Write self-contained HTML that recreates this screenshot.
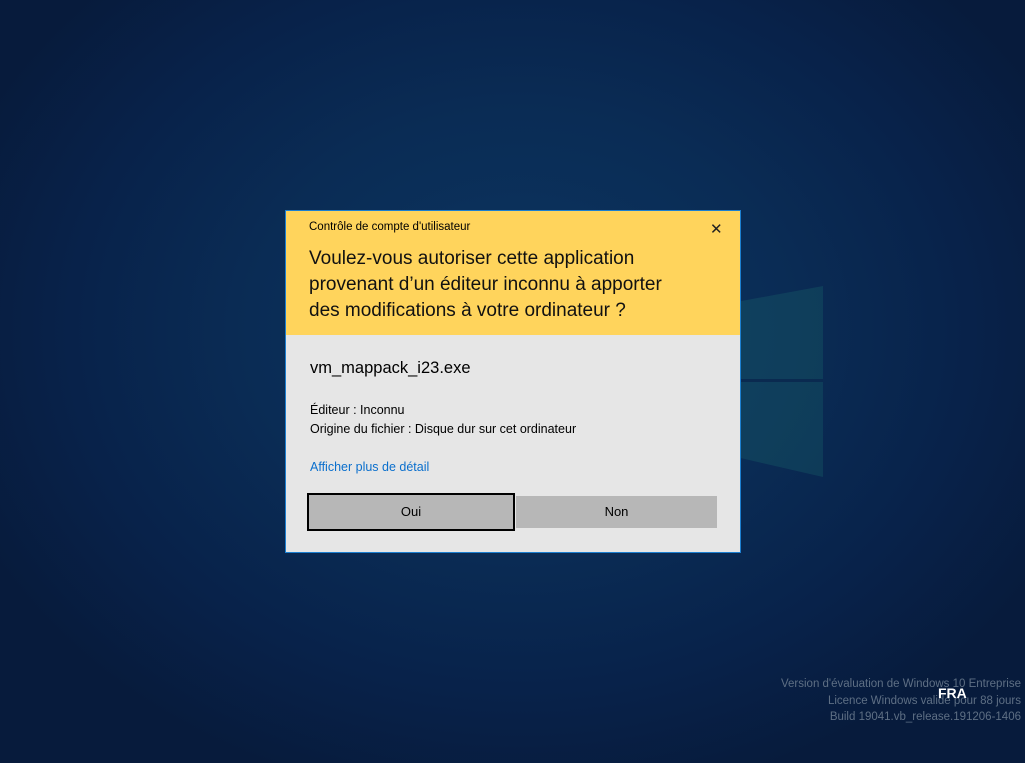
<!DOCTYPE html>
<html><head><meta charset="utf-8"><style>
*{margin:0;padding:0;box-sizing:border-box}
body{width:1025px;height:763px;overflow:hidden;position:relative;font-family:"Liberation Sans",sans-serif;
background:radial-gradient(ellipse 600px 480px at 520px 330px,#0c3561 0%,#0a2c55 45%,#08224a 75%,#071b3c 100%);}
.logo{position:absolute;left:740px;top:286px;width:83px;height:191px;background:rgba(30,110,110,.28);clip-path:polygon(0 8%,100% 0,100% 100%,0 90%)}
.logo2{position:absolute;left:740px;top:379px;width:83px;height:3px;background:#0a2a50}
.dlg{position:absolute;left:285px;top:210px;width:456px;height:343px;border:1px solid #1c7fd0;background:#e6e6e6}
.hd{height:124px;background:#ffd45c;position:relative}
.t1{position:absolute;left:23px;top:10px;font-size:11.5px;color:#000}
.x{position:absolute;left:424px;top:9px;font-size:15px;color:#222}
.t2{position:absolute;left:23px;top:35px;font-size:19px;line-height:26px;color:#111}
.fn{position:absolute;left:24px;top:148px;font-size:16.5px;color:#000}
.info{position:absolute;left:24px;top:190px;font-size:12.5px;line-height:19px;color:#000}
.lnk{position:absolute;left:24px;top:249px;font-size:12.5px;color:#0a6fcd}
.b{position:absolute;font-size:13px;text-align:center;background:#b7b7b7;color:#000}
.fra{position:absolute;left:938px;top:685px;font-size:14px;font-weight:bold;color:#fff}
.wm{position:absolute;right:4px;top:676px;font-size:11.5px;line-height:16.5px;color:#5e6f84;text-align:right}
</style></head><body>
<div class="logo"></div><div class="logo2"></div>
<div class="wm">Version d'évaluation de Windows 10 Entreprise<br>Licence Windows valide pour 88 jours<br>Build 19041.vb_release.191206-1406</div>
<div class="fra">FRA</div>
<div class="dlg">
<div class="hd"><div class="t1">Contrôle de compte d'utilisateur</div><div class="x">✕</div>
<div class="t2">Voulez-vous autoriser cette application<br>provenant d’un éditeur inconnu à apporter<br>des modifications à votre ordinateur ?</div></div>
<div class="fn">vm_mappack_i23.exe</div>
<div class="info">Éditeur : Inconnu<br>Origine du fichier : Disque dur sur cet ordinateur</div>
<div class="lnk">Afficher plus de détail</div>
<div class="b" style="left:21px;top:282px;width:208px;height:38px;border:2px solid #000;line-height:34px">Oui</div>
<div class="b" style="left:230px;top:285px;width:201px;height:32px;line-height:32px">Non</div>
</div>
</body></html>
